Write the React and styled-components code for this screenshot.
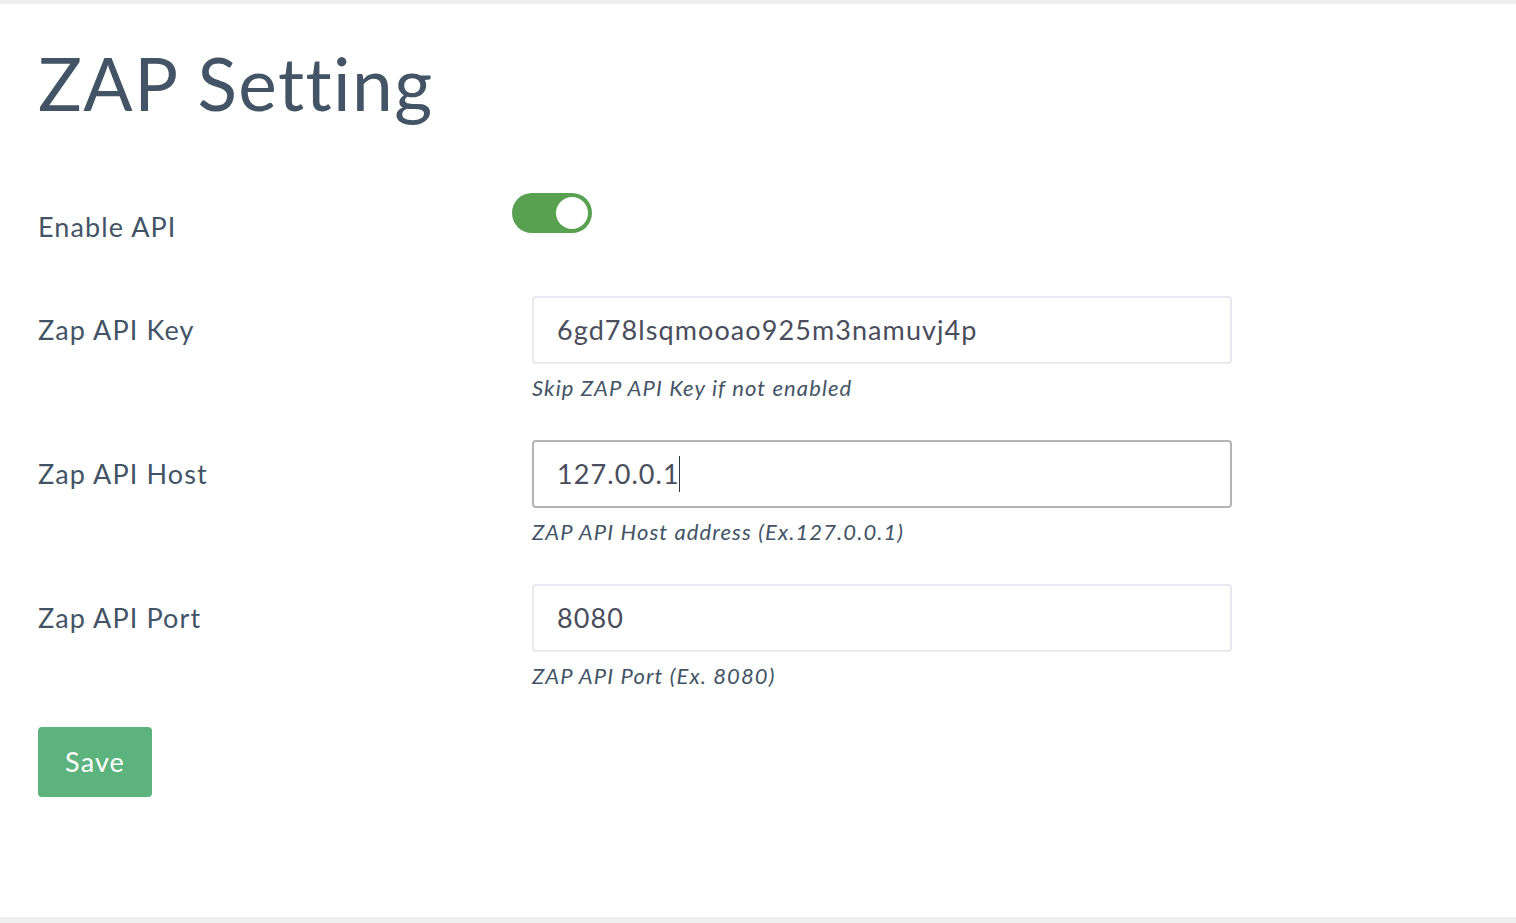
import React from "react";
import styled, { createGlobalStyle } from "styled-components";

const Global = createGlobalStyle`
  html, body { margin: 0; padding: 0; background: #eeeeee; }
  body { font-family: "Lato", "Noto Sans", sans-serif; }
  * { box-sizing: border-box; }
`;

const Panel = styled.main`
  margin-top: 4px;
  height: 913px;
  background: #ffffff;
  padding: 36px 38px 0 38px;
  color: #435466;
`;

const Title = styled.h1`
  margin: 0 0 65px 0;
  font-size: 73px;
  font-weight: 400;
  line-height: 1.2;
  color: #435466;
  letter-spacing: 1.4px;
`;

const Row = styled.div`
  display: grid;
  grid-template-columns: ${(p) => p.$labelWidth || 494}px 700px;
  margin-bottom: ${(p) => p.$gap}px;
`;

const Label = styled.label`
  font-size: 27px;
  line-height: 68px;
  height: 68px;
  color: #435466;
  white-space: nowrap;
  letter-spacing: 1.1px;
`;

const Field = styled.div`
  display: flex;
  flex-direction: column;
`;

const InputWrap = styled.div`
  position: relative;
  width: 700px;
  height: 68px;
`;

const Input = styled.input`
  width: 700px;
  height: 68px;
  border: 2px solid ${(p) => (p.$focus ? "#b3b3b8" : "#e9e9ef")};
  border-radius: 4px;
  padding: 0 23px;
  font-family: "Lato", "Noto Sans", sans-serif;
  font-size: 27px;
  letter-spacing: 1.08px;
  color: #4a4d5c;
  background: #fff;
  outline: none;
  caret-color: transparent;
`;

const CaretLayer = styled.div`
  position: absolute;
  left: 25px;
  top: 0;
  height: 68px;
  display: flex;
  align-items: center;
  pointer-events: none;
  font-family: "Lato", "Noto Sans", sans-serif;
  font-size: 27px;
  letter-spacing: 1.08px;
  color: transparent;
  white-space: pre;
`;

const Caret = styled.span`
  display: inline-block;
  width: 1.5px;
  height: 36px;
  margin-left: -1px;
  background: #333a44;
`;

const Help = styled.small`
  margin-top: 10px;
  font-size: 22px;
  line-height: 28px;
  font-style: italic;
  color: #435466;
  letter-spacing: 1.1px;
`;

const Switch = styled.button`
  position: relative;
  width: 80px;
  height: 40px;
  border: none;
  border-radius: 20px;
  background: #59a150;
  padding: 0;
  cursor: pointer;
`;

const Knob = styled.span`
  position: absolute;
  top: 4px;
  right: 4px;
  width: 32px;
  height: 32px;
  border-radius: 50%;
  background: #ffffff;
`;

const SaveButton = styled.button`
  width: 114px;
  height: 70px;
  border: none;
  border-radius: 4px;
  background: #5db37e;
  color: #ffffff;
  font-family: "Lato", "Noto Sans", sans-serif;
  font-size: 27px;
  letter-spacing: 1.1px;
  cursor: pointer;
`;

const fields = [
  { label: "Zap API Key", value: "6gd78lsqmooao925m3namuvj4p", help: "Skip ZAP API Key if not enabled" },
  { label: "Zap API Host", value: "127.0.0.1", help: "ZAP API Host address (Ex.127.0.0.1)", focus: true },
  { label: "Zap API Port", value: "8080", help: "ZAP API Port (Ex. 8080)" },
];

export default function App() {
  return (
    <>
      <Global />
      <Panel>
        <Title>ZAP Setting</Title>
        <Row $labelWidth={474} $gap={35}>
          <Label>Enable API</Label>
          <div>
            <Switch aria-label="Enable API">
              <Knob />
            </Switch>
          </div>
        </Row>
        {fields.map((f, i) => (
          <Row key={f.label} $gap={i === fields.length - 1 ? 37 : 38}>
            <Label>{f.label}</Label>
            <Field>
              <InputWrap>
                <Input defaultValue={f.value} $focus={f.focus} />
                {f.focus && (
                  <CaretLayer>
                    {f.value}
                    <Caret />
                  </CaretLayer>
                )}
              </InputWrap>
              <Help>{f.help}</Help>
            </Field>
          </Row>
        ))}
        <SaveButton>Save</SaveButton>
      </Panel>
    </>
  );
}
